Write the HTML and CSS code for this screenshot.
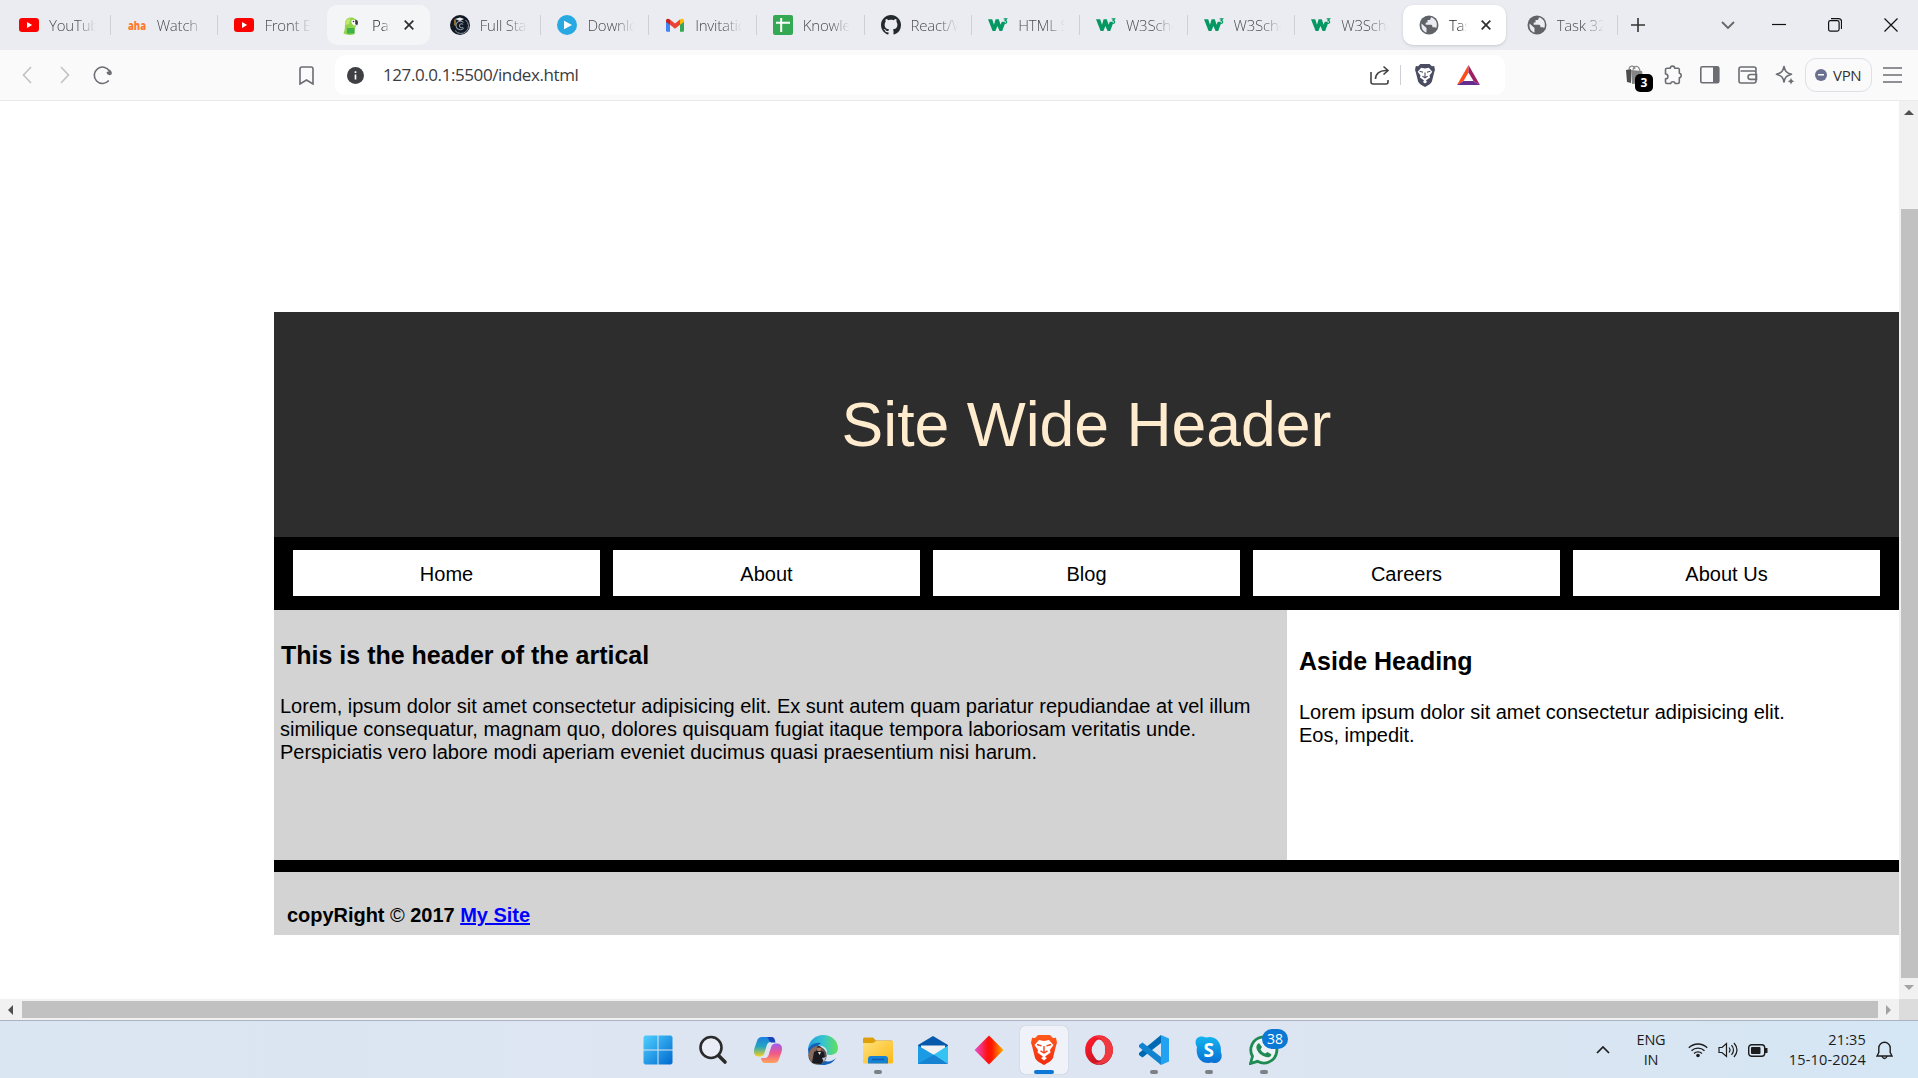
FILE: index.html
```html
<!DOCTYPE html>
<html lang="en">
<head>
<meta charset="utf-8">
<title>Task</title>
<link rel="stylesheet" href="styles.css">
</head>
<body>
<svg class="defs" width="0" height="0">
  <defs>
    <linearGradient id="gWin" x1="0" y1="0" x2="1" y2="1"><stop offset="0" stop-color="#4fd0ff"/><stop offset="1" stop-color="#0069cf"/></linearGradient>
    <linearGradient id="gCopA" x1="0" y1="0" x2="0" y2="1"><stop offset="0" stop-color="#1c7fe0"/><stop offset=".5" stop-color="#27a5c0"/><stop offset="1" stop-color="#f5d21a"/></linearGradient>
    <linearGradient id="gCopB" x1="0" y1="0" x2="0" y2="1"><stop offset="0" stop-color="#a05cf0"/><stop offset=".5" stop-color="#f0588a"/><stop offset="1" stop-color="#ffa45c"/></linearGradient>
    <linearGradient id="gEdge" x1="0" y1="0" x2="1" y2="0"><stop offset="0" stop-color="#1d9ee0"/><stop offset=".5" stop-color="#35c4d0"/><stop offset="1" stop-color="#62e05a"/></linearGradient>
    <linearGradient id="gFold" x1="0" y1="0" x2="1" y2="1"><stop offset="0" stop-color="#ffe17a"/><stop offset="1" stop-color="#fbb917"/></linearGradient>
    <linearGradient id="gDia" x1="0" y1="0" x2="1" y2="0"><stop offset="0" stop-color="#e84fd8"/><stop offset=".45" stop-color="#ff1010"/><stop offset=".6" stop-color="#ff1a00"/><stop offset="1" stop-color="#ffb000"/></linearGradient>
    <linearGradient id="gBrave" x1="0" y1="0" x2="0" y2="1"><stop offset="0" stop-color="#ff5a1c"/><stop offset="1" stop-color="#f02a10"/></linearGradient>
    <linearGradient id="gOpera" x1="0" y1="0" x2="1" y2="1"><stop offset="0" stop-color="#ff1b2d"/><stop offset="1" stop-color="#b0101c"/></linearGradient>
    <linearGradient id="gSky" x1="0" y1="0" x2="0" y2="1"><stop offset="0" stop-color="#12b4f0"/><stop offset="1" stop-color="#0a6fd4"/></linearGradient>
    <symbol id="yt" viewBox="0 0 20 20"><rect y="3" width="20" height="14" rx="3.200" fill="#f00"/><path d="M8 7l5.200 3L8 13z" fill="#fff"/></symbol>
    <symbol id="w3" viewBox="0 0 20 20"><path d="M0 4.300h4.200l1.800 5.400 1.600-5.400h3.200l1.800 5.400 1.200-3h2.600l.4 2.300-2.600 7h-2.600l-2.200-5-2 5H4.600z" fill="#059862"/><path d="M15.700 3.800h2.900l-1.500 1.800c2.300 0 2 2.800-.2 2.700-.6 0-1-.200-1.300-.6" fill="none" stroke="#059862" stroke-width="1.200"/></symbol>
    <symbol id="globe" viewBox="0 0 20 20"><circle cx="10" cy="10" r="9.500" fill="#5f6368"/><path d="M2.500 8.500l5 4.500v4.500C4.500 17 2 13.500 2.500 8.500zM12 2.300l-1 2.700H8.500v2.500H6.700v2.200h5.600c1.200 0 1.200 2.600 1.200 2.600h2.200c.8 0 1.300.7 1.300 1.300 2-4 .8-9.500-5-11.300z" fill="#ebecf1"/></symbol>
    <symbol id="lion" viewBox="0 0 26 30"><path d="M7 0h12l3 3 3-.3 1 5-1 3-3 12c-1 3-5 5-9 7.300C9 27.700 5 25.700 4 22.700L1 10.700l-1-3 1-5 3 .3z"/><path d="M8 5l5 .9L18 5l4.500 5-3.600 5 .7 2.600-4.200 3-2.400 2.400-2.400-2.400-4.200-3 .7-2.600L3.500 10z" fill="#fff"/><path d="M6 9.500l4.500 1.300M20 9.500l-4.500 1.300M13 11v6M9.500 15.800L13 18l3.500-2.200" fill="none" stroke="currentColor" stroke-width="1.400"/><path d="M10 23l3-1.600 3 1.600-3 2.400z" fill="#fff"/></symbol>
  </defs>
</svg>
<div class="screen">
  <header class="tabbar">
    <div class="tabs">
      <div class="tab"><svg class="fav"><use href="#yt"/></svg><span class="label">YouTube</span></div>
      <div class="tab"><svg class="fav" viewBox="0 0 20 20"><text x="1" y="14.500" class="aha" textLength="18" lengthAdjust="spacingAndGlyphs">aha</text></svg><span class="label">Watch</span></div>
      <div class="tab nosep"><svg class="fav"><use href="#yt"/></svg><span class="label">Front End</span></div>
      <div class="tab hover nosep"><svg class="fav" viewBox="0 0 20 20"><path d="M1.500 18.500C3 15 3 12 3 9c0-4 2.500-6.500 6-6.500 4 0 6 3 5 7.500-.3 2-1 3-1.500 5v4c-3 1.500-8 1-11-.5z" fill="#8fd44a"/><path d="M3.500 10c-.5-4 2-6.500 5-6.800L7 9z" fill="#c3e86e"/><path d="M9.500 5.500c2-1.500 4-.5 4.500 1.500L13 10.500c-2 .3-4-2.500-3.500-5z" fill="#fff"/><circle cx="11.500" cy="6.500" r=".8" fill="#222"/><path d="M13.300 4.500c2.700.2 3.500 3.200 1.700 6L13.200 8.500z" fill="#3a3a3a"/><path d="M5 13h7.500v5.500H5z" fill="#3fb04a"/></svg><span class="label">Paste</span><svg class="x" viewBox="0 0 10 10"><path d="M.7.7l8.600 8.600M9.300.7L.7 9.300"/></svg></div>
      <div class="tab"><svg class="fav" viewBox="0 0 20 20"><circle cx="10" cy="10" r="10" fill="#111a24"/><path d="M15.500 5A7.500 7.500 0 1 1 5 15.500" fill="none" stroke="#9aa4ad" stroke-width=".9"/><path d="M13.500 7.500A4.300 4.300 0 1 0 13.800 13M13 9.500a2 2 0 1 0 0 2.500" fill="none" stroke="#8d969e" stroke-width="1.100"/><path d="M5 4l5-1.500L14 4l-4 2z" fill="#e7eaec"/><path d="M5 4.500v6" stroke="#d79a3c" stroke-width="1.300"/></svg><span class="label">Full Stack</span></div>
      <div class="tab"><svg class="fav" viewBox="0 0 20 20"><circle cx="10" cy="10" r="10" fill="#29a9e1"/><path d="M7 5.800l8 4.200-8 4.200z" fill="#fff"/></svg><span class="label">Downloads</span></div>
      <div class="tab"><svg class="fav" viewBox="0 0 20 20"><path d="M1 6v9.500c0 1 .5 1.300 1.200 1.300H5V9z" fill="#4285f4"/><path d="M15 9v7.800h2.800c.8 0 1.200-.5 1.200-1.300V6z" fill="#34a853"/><path d="M5 4.500l5 4 5-4v5.300l-5 4-5-4z" fill="#ea4335"/><path d="M1 6c0-2.500 2-3 4-1.500v5.300L1 7z" fill="#c5221f"/><path d="M19 6c0-2.500-2-3-4-1.500v5.300L19 7z" fill="#fbbc04"/></svg><span class="label">Invitation</span></div>
      <div class="tab"><svg class="fav" viewBox="0 0 20 20"><rect width="20" height="20" rx="2" fill="#34a853"/><path d="M8.200 3v14M3 7.800h14" stroke="#fff" stroke-width="2"/></svg><span class="label">Knowledge</span></div>
      <div class="tab"><svg class="fav" viewBox="0 0 16 16"><path fill="#24292f" d="M8 0C3.580 0 0 3.580 0 8c0 3.540 2.290 6.530 5.470 7.590.4.070.550-.170.550-.380 0-.190-.010-.820-.010-1.490-2.010.370-2.530-.490-2.690-.940-.090-.230-.480-.940-.820-1.130-.280-.150-.680-.520-.010-.530.630-.010 1.080.580 1.230.820.720 1.210 1.870.870 2.330.660.070-.520.280-.870.510-1.070-1.780-.200-3.640-.890-3.640-3.950 0-.870.310-1.590.820-2.150-.080-.200-.360-1.020.080-2.120 0 0 .670-.210 2.200.820.640-.180 1.320-.270 2-.270s1.360.090 2 .270c1.530-1.040 2.200-.820 2.200-.820.440 1.100.160 1.920.080 2.120.510.560.820 1.270.820 2.150 0 3.070-1.870 3.750-3.650 3.950.290.250.540.730.540 1.480 0 1.070-.010 1.930-.010 2.200 0 .210.150.460.550.380A8.010 8.010 0 0 0 16 8c0-4.420-3.580-8-8-8z"/></svg><span class="label">React/Webpack</span></div>
      <div class="tab"><svg class="fav"><use href="#w3"/></svg><span class="label">HTML Styles</span></div>
      <div class="tab"><svg class="fav"><use href="#w3"/></svg><span class="label">W3Schools</span></div>
      <div class="tab"><svg class="fav"><use href="#w3"/></svg><span class="label">W3Schools</span></div>
      <div class="tab nosep"><svg class="fav"><use href="#w3"/></svg><span class="label">W3Schools</span></div>
      <div class="tab active nosep"><svg class="fav"><use href="#globe"/></svg><span class="label">Task 31</span><svg class="x" viewBox="0 0 10 10"><path d="M.7.7l8.600 8.600M9.300.7L.7 9.300"/></svg></div>
      <div class="tab"><svg class="fav"><use href="#globe"/></svg><span class="label">Task 32</span></div>
    </div>
    <svg class="newtab" width="14" height="14" viewBox="0 0 14 14"><path d="M7 0v14M0 7h14"/></svg>
    <div class="winctl">
      <svg class="tabsearch" width="14" height="14" viewBox="0 0 14 14"><path d="M1 4l6 6 6-6"/></svg>
      <svg width="14" height="14" viewBox="0 0 14 14"><path d="M0 6.500h14"/></svg>
      <svg width="14" height="14" viewBox="0 0 14 14"><rect x=".6" y="2.600" width="10.500" height="10.500" rx="1.800"/><path d="M3 .6h7.500a3 3 0 0 1 3 3V11"/></svg>
      <svg width="14" height="14" viewBox="0 0 14 14"><path d="M.5.5l13 13M13.500.5l-13 13"/></svg>
    </div>
  </header>

  <div class="toolbar">
    <div class="navbtns">
      <svg width="10" height="18" viewBox="0 0 10 18" class="dim"><path d="M9 1L1.500 9 9 17"/></svg>
      <svg width="10" height="18" viewBox="0 0 10 18" class="dim"><path d="M1 1l7.500 8L1 17"/></svg>
    </div>
    <svg class="reload" width="20" height="20" viewBox="0 0 20 20"><path d="M15.800 15.500A8.200 8.200 0 1 1 16.500 6"/><path d="M13.500 7.500q.5-1 2-1l1.500-2q2 2 1.800 4.500-1 1.500-2.800 1-2-.5-2.500-2.500z" fill="#6b6d73" stroke="none"/></svg>
    <svg class="bookmark" width="15" height="19" viewBox="0 0 15 19"><path d="M1 18V3a2 2 0 0 1 2-2h9a2 2 0 0 1 2 2v15l-6.500-4z"/></svg>
    <div class="urlbox">
      <svg class="info" width="17" height="17" viewBox="0 0 17 17"><circle cx="8.500" cy="8.500" r="8.500" fill="#3f4043" stroke="none"/><path d="M8.500 7.500v5M8.500 4.200v1.800" stroke="#fff" stroke-width="1.700"/></svg>
      <span class="url">127.0.0.1:5500/index.html</span>
      <svg width="20" height="20" viewBox="0 0 20 20" class="dark"><path d="M1 7v10a2 2 0 0 0 2 2h13a2 2 0 0 0 2-2v-2M5.500 14c0-5 4-8.500 10-8.500h2.500M13.500 1.500L18 5.500l-4.500 4"/></svg>
      <i class="vline"></i>
      <svg class="lionbar" width="20" height="23"><use href="#lion"/></svg>
      <svg width="23" height="20" viewBox="0 0 23 20" class="bat"><path d="M11.500 0L0 20l6.500-4 5-8.500z" fill="#ff4a1c"/><path d="M11.500 0L23 20l-6.500-4-5-8.500z" fill="#9e1f63"/><path d="M0 20h23l-6.500-4h-10z" fill="#662d91"/></svg>
    </div>
    <div class="exts">
      <div class="ext"><svg width="20" height="20" viewBox="0 0 20 20"><path d="M1 5l5-1v14l-4-1z" fill="#4d4d4d" stroke="none"/><path d="M6 5l11 1 2 12-12 1z" fill="#858585" stroke="none"/><path d="M4 5c0-5 5-5 6-1M8 5c1-5 6-5 7 1" stroke="#8a8a8a" stroke-width="1.200"/></svg><b>3</b></div>
      <svg width="20" height="20" viewBox="0 0 20 20"><path d="M4 3.300h3.300a2.200 2.200 0 0 1 4.400 0H15q1.300 0 1.300 1.300v3.500a2.400 2.400 0 0 1 0 4.700v4.200q0 1.500-1.300 1.500h-2.800a2.300 2.300 0 0 0-4.500 0H4q-1.500 0-1.500-1.500v-3.200a2.400 2.400 0 0 0 0-4.800V4.600q0-1.300 1.500-1.300z" stroke-linejoin="round"/></svg>
      <svg width="20" height="18" viewBox="0 0 20 18"><rect x=".8" y=".8" width="18" height="16" rx="1.500"/><path d="M13 1h6v16h-6z" fill="#6b6d73" stroke="none"/></svg>
      <svg width="20" height="18" viewBox="0 0 20 18"><path d="M18 5.500V3a2 2 0 0 0-2-2H3a2 2 0 0 0-2 2v12a2 2 0 0 0 2 2h13a2 2 0 0 0 2-2V7a2 2 0 0 0-2-2H2.500M18.500 8.500h-6a2.400 2.400 0 0 0 0 4.900h6z"/></svg>
      <svg width="20" height="20" viewBox="0 0 20 20"><path d="M9 1.500c1 4.500 2 6.200 7.500 7.800-5.500 1.500-6.500 3.200-7.500 7.700-1-4.500-2-6.200-7.500-7.700C7 7.700 8 6 9 1.500z" stroke-linejoin="round"/><path d="M16 12.500c.5 2.200 1 3 3.500 3.700-2.500.6-3 1.400-3.500 3.600-.5-2.200-1-3-3.500-3.600 2.500-.7 3-1.500 3.500-3.700z" fill="#6b6d73" stroke="none"/></svg>
    </div>
    <div class="vpn"><i></i><span>VPN</span></div>
    <svg class="menu" width="20" height="16" viewBox="0 0 20 16"><path d="M0 1h19M0 8h19M0 15h19"/></svg>
  </div>

  <div class="viewport">
    <main class="page">
      <div class="site-header">Site Wide Header</div>
      <nav class="site-nav"><a>Home</a><a>About</a><a>Blog</a><a>Careers</a><a>About Us</a></nav>
      <div class="columns">
        <article class="article">
          <h2>This is the header of the artical</h2>
          <p>Lorem, ipsum dolor sit amet consectetur adipisicing elit. Ex sunt autem quam pariatur repudiandae at vel illum<br>similique consequatur, magnam quo, dolores quisquam fugiat itaque tempora laboriosam veritatis unde.<br>Perspiciatis vero labore modi aperiam eveniet ducimus quasi praesentium nisi harum.</p>
        </article>
        <aside class="aside">
          <h2>Aside Heading</h2>
          <p>Lorem ipsum dolor sit amet consectetur adipisicing elit.<br>Eos, impedit.</p>
        </aside>
      </div>
      <footer class="site-footer">copyRight <span class="copy">©</span> 2017 <a href="#">My Site</a></footer>
    </main>
    <div class="vscroll"><i class="up"></i><div class="vthumb"></div><i class="down"></i></div>
    <div class="hscroll"><i class="left"></i><div class="hthumb"></div><i class="right"></i></div>
    <div class="corner"></div>
  </div>

  <footer class="taskbar">
    <div class="apps">
      <div class="app"><svg viewBox="0 0 30 30"><path d="M2 .5h12.500v14H.5V2zM15.500.5H28L29.500 2v12.500h-14zM.5 15.500h14v14H2L.5 28zM15.500 15.500h14V28L28 29.500H15.500z" fill="url(#gWin)"/></svg></div>
      <div class="app"><svg viewBox="0 0 30 30"><circle cx="13" cy="12.500" r="10.500" fill="#e9edf5" stroke="#2b2b2b" stroke-width="2.600"/><path d="M20.500 20.500l6.500 6.500" stroke="#2b2b2b" stroke-width="3.600" stroke-linecap="round"/></svg></div>
      <div class="app"><svg viewBox="0 0 30 30"><path d="M9 2h9c3 0 3.500 3 4 5h-4c-3 0-4 2-5 6l-2 6c-1 2-3 2.500-5 2.500C1.500 21.500 0 18 1.500 13L4 6c1-3 2.500-4 5-4z" fill="url(#gCopA)"/><path d="M14 2h4.500c3 0 3.500 3 4 5.500H18c-2-1-2-4-4-5.500z" fill="#1743b8"/><path d="M21 28h-9c-3 0-3.500-3-4-5h3.500c3 0 4-2 5-6l2-6c1-2 3-2.500 5-2.500 5 0 6.500 3.500 5 8.500L26 24c-1 3-2.500 4-5 4z" fill="url(#gCopB)"/></svg></div>
      <div class="app"><svg viewBox="0 0 30 30"><path d="M0 14C1 5 8 0 15 0c9 0 15 6 15 13 0 5-4 7-8 7-3 0-4-1-3-3 0-6-8-9-19-3z" fill="url(#gEdge)"/><path d="M0 14c3-5 8-7 13-6-6 3-7 14 4 18 4 1 8 0 11-3-3 5-8 7-13 7C6 30 0 23 0 14z" fill="#1560b8"/><circle cx="9.500" cy="20.500" r="9.200" fill="#5a5350"/><path d="M1 19c1-6 6-8 9-8l-3 6-3 10c-2-2-3-4-3-8z" fill="#8a6a5c"/><path d="M4 28l2-11 4-2 6 2 1 6-4 6z" fill="#1a1b20"/><circle cx="11" cy="14" r="2.200" fill="#b77c5c"/><path d="M8.500 12.500q2.500-3 5 0z" fill="#111"/><path d="M10 17l1.500 3 1.500-3z" fill="#e8e4e2"/><path d="M14 23l4-1-2 5z" fill="#b9c4d2"/></svg></div>
      <div class="app run"><svg viewBox="0 0 30 30"><path d="M0 4q0-1.500 1.500-1.500H10l3 3h15.500Q30 5.500 30 7v6H0z" fill="#dd9f0b"/><path d="M0 8h10l3-2h17v21.500q0 1-1.500 1h-27Q0 28.500 0 27.500z" fill="url(#gFold)"/><path d="M5 28.500V24q0-3 3-3h14q3 0 3 3v4.500z" fill="#1581d7"/><path d="M9 24.500h12" stroke="#0b5ba5" stroke-width="1.400"/></svg></div>
      <div class="app"><svg viewBox="0 0 30 30"><path d="M0 10L15 1l15 9v5H0z" fill="#0859ac"/><path d="M3 10.500h24v10H3z" fill="#f2f2f4"/><path d="M0 10.500L16 20 30 29H0z" fill="#1a9be4"/><path d="M30 10.500v18.500L16 19.500z" fill="#35c3f3"/><path d="M0 29l16-9.500L30 29z" fill="#1683d2"/></svg></div>
      <div class="app"><svg viewBox="0 0 30 30"><path d="M15 .5L29.500 15 15 29.500.5 15z" fill="url(#gDia)"/></svg></div>
      <div class="app current"><svg class="brave" viewBox="0 0 26 30"><use href="#lion"/></svg></div>
      <div class="app"><svg viewBox="0 0 30 30"><ellipse cx="15" cy="15" rx="10.600" ry="11.600" fill="none" stroke="url(#gOpera)" stroke-width="6.500"/><path d="M15 1c8 0 14 6 14 14s-6 14-14 14c-2 0-4-.5-5.500-1.500C18 29 21 22 21 15S18 1 9.500 2.500C11 1.500 13 1 15 1z" fill="#f0383f"/><ellipse cx="15" cy="15" rx="6" ry="10.500" fill="#e0e6f1"/></svg></div>
      <div class="app run"><svg viewBox="0 0 30 30"><path d="M22 0l8 3.500v23L22 30z" fill="#24a2f2"/><path d="M22 0v8L3.500 22.500 0 20v-2z" fill="#0069b4"/><path d="M22 30v-8L3.500 7.500 0 10v2z" fill="#1284cf"/></svg></div>
      <div class="app run"><svg viewBox="0 0 30 30"><path d="M3 12C-1 5 4-1 12 2.500 21 0 28 7 26.800 17c3 6-2 13-9 10.500C8 30 1 22 3 12z" fill="url(#gSky)"/><text x="14.700" y="22" text-anchor="middle" class="skype">S</text></svg></div>
      <div class="app run"><svg viewBox="0 0 30 30"><path d="M1.500 28.500l2-7.200a13 13 0 1 1 5 5z" fill="#edf3f5" stroke="#1f8a53" stroke-width="2.800"/><path d="M10 8l3 4-1.500 2.500c1 2 2.500 3 4.500 4l2.500-1.500 4 2.500c-1 3-4 3.500-7 2-5-2-7-5-8-8-.5-2.500.5-4.500 2.500-5.500z" fill="#1f8a53"/></svg><span class="badge">38</span></div>
    </div>
    <div class="tray">
      <svg width="14" height="8" viewBox="0 0 14 8"><path d="M1 7l6-6 6 6" stroke-width="1.700"/></svg>
      <div class="lang">ENG<br>IN</div>
      <svg width="20" height="16" viewBox="0 0 20 16"><path d="M.8 5.800a13 13 0 0 1 18.400 0M3.500 8.700a9.300 9.300 0 0 1 13 0M6 11.500a5.700 5.700 0 0 1 8 0" stroke-width="1.300"/><circle cx="10" cy="13.500" r="1.800" fill="#1c1c1c" stroke="none"/></svg>
      <svg class="sound" width="20" height="16" viewBox="0 0 20 16"><path d="M1 5.500h3L8.500 1.500v13L4 10.500H1zM11 5.500q2 2.500 0 5M13.500 3.200q4 4.800 0 9.600M16 1q6 7 0 14" stroke-width="1.200"/></svg>
      <svg class="power" width="20" height="13" viewBox="0 0 20 13"><rect x=".7" y=".7" width="16" height="11.600" rx="3"/><rect x="3" y="3" width="9.500" height="7" rx="1" fill="#1c1c1c" stroke="none"/><path d="M18.200 4v5" stroke-width="2.600"/></svg>
      <div class="clock">21:35<br>15-10-2024</div>
      <svg class="bell" width="17" height="19" viewBox="0 0 17 19"><path d="M1 15l1.800-3.500V7a5.700 5.700 0 0 1 11.400 0v4.500L16 15zM6 15.500q2.500 4 5 0"/></svg>
    </div>
  </footer>
</div>
</body>
</html>
```

FILE: styles.css
```css
* { box-sizing: border-box; }
body { margin: 0; background: #fff; font-family: "Open Sans", "Noto Sans", sans-serif; overflow: hidden; }
.defs { position: absolute; }
.screen { width: 1918px; height: 1078px; display: grid; grid-template-rows: 50px 51px 919px 58px; overflow: hidden; }
svg { flex: none; fill: none; stroke: #6b6d73; stroke-width: 1.600; }
svg use, .fav, .app svg { stroke: none; }

/* Tab strip */
.tabbar { background: #ebecf1; display: flex; align-items: center; padding-left: 3px; }
.tabs { display: flex; }
.tab { position: relative; width: 107.700px; height: 40px; display: flex; align-items: center; padding-left: 16px; }
.tab::after { content: ""; position: absolute; right: 0; top: 10px; width: 1px; height: 20px; background: #cfd0d5; }
.tab.nosep::after { display: none; }
.tab.hover::before, .tab.active::before { content: ""; position: absolute; z-index: 0; left: 1px; top: 0; width: 103px; height: 40px; border-radius: 10px; background: #f4f5f7; }
.tab.active::before { left: 0; background: #fff; box-shadow: 0 1px 3px rgba(0, 0, 0, .15); }
.fav { width: 20px; height: 20px; position: relative; }
.aha { font: 900 12px "Open Sans", sans-serif; fill: #ff7a2f; }
.label { position: relative; margin-left: 10px; width: 47px; overflow: hidden; white-space: nowrap; font-size: 15px; font-weight: 300; letter-spacing: -.2px; color: #4c4d52; -webkit-mask-image: linear-gradient(90deg, #000 60%, transparent); mask-image: linear-gradient(90deg, #000 60%, transparent); }
.hover .label, .active .label { width: 18px; color: #222; }
.x { position: relative; width: 10px; height: 10px; margin-left: 14px; stroke: #2d2e32; stroke-width: 1.700; }
.newtab { margin-left: 13px; stroke: #333; }
.winctl { margin-left: auto; display: flex; gap: 42px; padding-right: 20px; }
.winctl svg { stroke: #111; stroke-width: 1.200; }
.winctl .tabsearch { margin-right: -5px; stroke: #666; stroke-width: 1.800; }

/* Address bar */
.toolbar { background: #fafafa; border-bottom: 1px solid #e9e9ee; display: flex; align-items: center; }
.navbtns { display: flex; align-items: center; gap: 28px; padding-left: 22px; }
.reload { margin-left: 23px; }
.dim { stroke: #c0c1c5; }
.bookmark { margin-left: 186px; }
.urlbox { margin-left: 21px; width: 1170px; height: 40px; border-radius: 10px; background: #fff; display: flex; align-items: center; padding-left: 12px; }
.url { margin-left: 19px; width: 987px; padding-bottom: 1px; font-size: 17px; letter-spacing: -.42px; color: #3b3c40; white-space: nowrap; }
.dark { stroke: #444; }
.vline { width: 1px; height: 20px; margin: 0 14px 0 10px; background: #cfd0d5; }
.lionbar { fill: #4a4c62; color: #4a4c62; }
.bat { margin-left: 22px; stroke: none; }
.exts { margin-left: 120px; display: flex; align-items: center; gap: 17.500px; }
.ext { position: relative; display: flex; }
.ext b { position: absolute; left: 10px; top: 9px; width: 18px; height: 18px; border-radius: 5px; background: #000; color: #fff; font-size: 12px; line-height: 18px; text-align: center; }
.vpn { margin-left: 10px; width: 67px; height: 34px; border: 1px solid #dfe0e6; border-radius: 11px; display: flex; align-items: center; gap: 6px; padding-left: 9px; font-size: 15px; letter-spacing: -.3px; color: #333; }
.vpn i { width: 12px; height: 12px; border-radius: 50%; background: linear-gradient(#fff, #fff) center / 6px 1.500px no-repeat #6a7090; }
.menu { margin-left: 11px; }

/* Scrolled document */
.viewport { background: #fff; display: grid; grid-template: 898px 21px / 1899px 19px; }
.page { padding: 211px 0 0 274px; font-family: "Liberation Sans", Arial, sans-serif; font-size: 20px; line-height: 23px; color: #000; }
.site-header { height: 225px; background: #2d2d2d; color: #ffebcd; font-size: 62.500px; display: flex; align-items: center; justify-content: center; }
.site-nav { height: 73px; background: #000; padding: 13px 19px 14px; display: grid; grid-template-columns: repeat(5, 1fr); gap: 13px; }
.site-nav a { background: #fff; display: flex; align-items: center; justify-content: center; padding-top: 2px; }
.columns { height: 250px; display: flex; }
.article { width: 1013px; background: #d3d3d3; padding: 31px 0 0 6px; }
.aside { flex: 1; padding: 37px 0 0 12px; }
.page h2 { margin: 0; font-size: 25px; line-height: 29px; }
.article h2 { padding-left: 1px; }
.page p { margin: 25px 0 0; white-space: nowrap; }
.site-footer { height: 75px; border-top: 12px solid #000; background: #d3d3d3; padding: 32px 0 0 13px; font-weight: 700; letter-spacing: -.03px; }
.site-footer a { color: #00f; }
.copy { font-weight: 400; }

.vscroll { background: #f1f1f1; display: flex; flex-direction: column; align-items: center; padding-top: 9px; }
.vthumb { margin-top: 94px; width: 17px; height: 769px; background: #c1c1c1; align-self: flex-end; }
.hscroll { background: #f1f1f1; display: flex; align-items: center; padding-left: 8px; }
.hthumb { width: 1856px; height: 17px; margin-left: 9px; background: #c1c1c1; }
.corner { background: #dcdcdc; }
.up, .down { border: 5px solid transparent; }
.up { border-top: 0; border-bottom-color: #505050; }
.down { border-bottom: 0; border-top-color: #a3a3a3; margin-top: 7px; }
.left, .right { border: 5px solid transparent; }
.left { border-left: 0; border-right-color: #505050; }
.right { border-right: 0; border-left-color: #a3a3a3; margin-left: 8px; }

/* Desktop taskbar */
.taskbar { border-top: 1px solid #a9b3c4; background: linear-gradient(90deg, #dae6f1, #dee5f2 45%, #dbe5f1 75%, #d5e6f4); display: flex; justify-content: space-between; padding: 5px 25px 0 634px; }
.apps { display: flex; gap: 7.100px; }
.app { position: relative; width: 48px; height: 48px; padding: 9px; border-radius: 5px; }
.app svg { display: block; width: 30px; height: 30px; }
.app.current { background: #eff3f9; box-shadow: 0 0 1px rgba(0, 0, 0, .3); }
.app.run::after, .app.current::after { content: ""; position: absolute; bottom: 0; left: 20px; width: 8px; height: 4px; border-radius: 2px; background: #7d8085; }
.app.current::after { left: 14px; width: 20px; background: #0a78d4; }
.brave { fill: url(#gBrave); color: #f8401a; }
.skype { font: 700 19px "Open Sans", sans-serif; fill: #fff; }
.badge { position: absolute; left: 22px; top: 3px; width: 26px; height: 20px; border-radius: 10px; background: #0a78d4; color: #fff; font-size: 14px; line-height: 20px; text-align: center; }
.tray { display: flex; align-items: center; height: 48px; font-size: 14.500px; line-height: 20px; color: #1c1c1c; }
.tray svg { stroke: #1c1c1c; stroke-width: 1.400; }
.lang { width: 40px; margin: 0 17px 0 21px; text-align: center; letter-spacing: -.2px; }
.sound { margin-left: 10px; }
.power { margin-left: 10px; }
.clock { width: 86px; margin: 0 10px 0 12px; text-align: right; white-space: nowrap; letter-spacing: .15px; }
```
